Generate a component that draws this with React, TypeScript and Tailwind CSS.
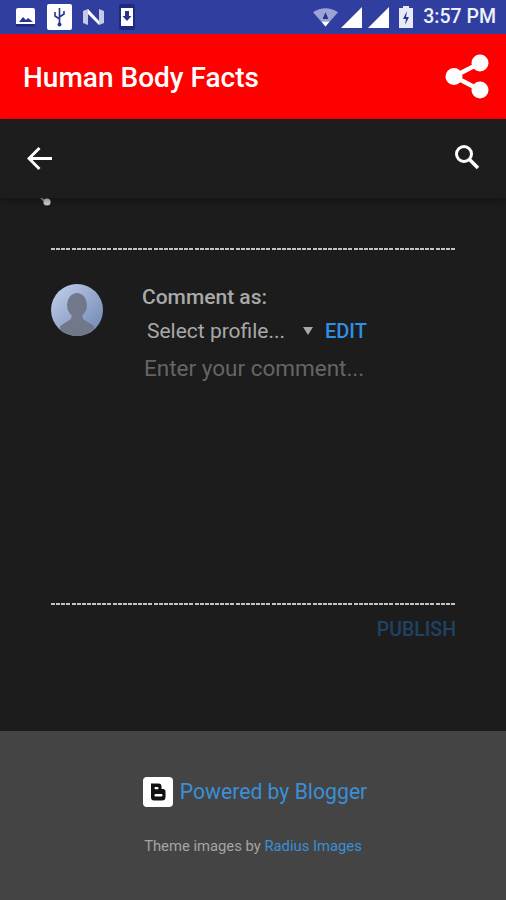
const DASHES =
  "h-[2px] w-full bg-[repeating-linear-gradient(90deg,#c4c4c4_0,#c4c4c4_4px,transparent_4px,transparent_5.128px)]";

function StatusBar() {
  return (
    <div className="flex h-[34px] items-center justify-between bg-[#303f9f] pl-[16px] pr-[10px]">
      <div className="flex items-center">
        <svg width="20" height="20" viewBox="0 0 20 20">
          <rect x="0" y="1" width="19" height="18" rx="2" fill="#fff" />
          <path d="M3 15l4-5 3 3 2-2 5 4z" fill="#27348b" />
          <rect x="0" y="17" width="19" height="2.500" fill="#1c2a80" />
        </svg>
        <svg className="ml-[11px]" width="25" height="26" viewBox="0 0 25 26">
          <rect x="0" y="0" width="25" height="26" rx="2" fill="#fff" />
          <path d="M12.500 4v16M8 8v4l4.500 3M17 7v3l-4.500 3" stroke="#27348b" strokeWidth="1.600" fill="none" />
          <circle cx="12.500" cy="20.500" r="2" fill="#27348b" />
        </svg>
        <svg className="ml-[11px]" width="21" height="20" viewBox="0 0 21 20">
          <path d="M0 4l5-2v16l-5-2zM16 2l5 2v12l-5 2z" fill="#c3cbe6" />
          <path d="M5 2l11 12v4L5 7z" fill="#fff" />
        </svg>
        <svg className="ml-[15px]" width="16" height="26" viewBox="0 0 16 26">
          <rect x="0" y="0" width="16" height="26" rx="2.500" fill="#1c2a80" />
          <rect x="2" y="4" width="12" height="18" fill="#fff" />
          <path d="M6 7h4v5h2.500L8 17 3.500 12H6z" fill="#27348b" />
        </svg>
      </div>
      <div className="flex items-center">
        <svg width="25" height="20" viewBox="0 0 26 20">
          <path d="M0 5Q13-3 26 5L13 20z" fill="#9aa5d6" />
          <path d="M9 15h8l-4 5z" fill="#fff" />
          <path d="M13 5l3 7h-6z" fill="#27348b" />
        </svg>
        <svg className="ml-[3px]" width="21" height="21" viewBox="0 0 21 21">
          <path d="M0 21L21 0v21z" fill="#fff" />
        </svg>
        <svg className="ml-[6px]" width="21" height="21" viewBox="0 0 21 21">
          <path d="M0 21L21 0v21z" fill="#fff" />
        </svg>
        <svg className="ml-[9px]" width="16" height="22" viewBox="0 0 16 22">
          <path d="M5 0h6v2h4v20H1V2h4z" fill="#e8ebf6" />
          <path d="M9 5l-4 8h3l-1 6 4-8H8z" fill="#27348b" />
        </svg>
        <span className="ml-[9px] font-['Roboto',sans-serif] text-[19.500px] font-medium leading-none text-[#eef0fa]">
          3:57 PM
        </span>
      </div>
    </div>
  );
}

function AppBar() {
  return (
    <div className="flex h-[85px] items-center justify-between bg-[#ff0000] pl-[23px] pr-[15px]">
      <h1 className="mt-[2px] font-['Roboto',sans-serif] text-[28px] font-medium leading-none text-white">
        Human Body Facts
      </h1>
      <svg width="47" height="47" viewBox="0 0 47 47">
        <path d="M36 10L10 23.500 36 37" stroke="#fff" strokeWidth="4.500" fill="none" />
        <circle cx="36" cy="10" r="8.500" fill="#fff" />
        <circle cx="10" cy="23.500" r="8.500" fill="#fff" />
        <circle cx="36" cy="37" r="8.500" fill="#fff" />
      </svg>
    </div>
  );
}

function TopNav() {
  return (
    <div className="z-10 flex h-[79px] items-center justify-between bg-[#1d1d1d] pl-[27px] pr-[26px] shadow-[0_2px_6px_rgba(0,0,0,0.35)]">
      <svg width="25" height="25" viewBox="0 0 25 25">
        <path d="M25 12.500H3M12.500 2L2 12.500 12.500 23" stroke="#fff" strokeWidth="3" fill="none" />
      </svg>
      <svg className="mb-[4px]" width="26" height="26" viewBox="0 0 26 26">
        <circle cx="10" cy="10" r="7.500" stroke="#fff" strokeWidth="3" fill="none" />
        <path d="M15.500 15.500L24 24" stroke="#fff" strokeWidth="3.600" fill="none" />
      </svg>
    </div>
  );
}

function CommentForm() {
  return (
    <div className="flex-1 bg-[#1c1c1c] pl-[51px] pr-[50px]">
      <div className="relative h-[50px]">
        <svg className="absolute left-[-13px] top-[-3px]" width="16" height="14" viewBox="0 0 16 14">
          <path d="M1 2l5 2 1 1-2 1z" fill="#8a8a8a" />
          <circle cx="9" cy="7" r="3.600" fill="#c8c8c8" />
        </svg>
      </div>
      <div className={DASHES} />
      <div className="mt-[34px] flex">
        <div className="flex h-[52px] w-[52px] items-end justify-center overflow-hidden rounded-full bg-gradient-to-br from-[#c3d2ee] to-[#6f83ae]">
          <svg width="52" height="52" viewBox="0 0 52 52">
            <ellipse cx="26" cy="21" rx="10" ry="12" fill="#71788a" />
            <path d="M21 30h10l1 5 11 7v10H9V42l11-7z" fill="#71788a" />
          </svg>
        </div>
        <div className="ml-[39px] font-['Roboto',sans-serif]">
          <div className="mt-[2px] text-[21px] font-medium leading-[22px] text-[#a9a9a9]">Comment as:</div>
          <div className="mt-[11px] flex items-center pl-[5px] leading-[24px]">
            <span className="w-[156px] text-[21px] text-[#a8a8a8]">Select profile...</span>
            <span className="h-0 w-0 border-x-[5px] border-t-[8px] border-x-transparent border-t-[#a8a8a8]" />
            <span className="ml-[12px] text-[20px] font-medium text-[#2f8fe6]">EDIT</span>
          </div>
          <div className="mt-[12px] pl-[2px] text-[22.500px] leading-[26px] text-[#656565]">Enter your comment...</div>
        </div>
      </div>
      <div className={`mt-[222px] ${DASHES}`} />
      <div className="mt-[14px] text-right font-['Roboto',sans-serif] text-[19.500px] font-medium leading-[22px] text-[#1f4363]">
        PUBLISH
      </div>
    </div>
  );
}

function Footer() {
  return (
    <footer className="flex h-[169px] flex-col items-center bg-[#444444] pt-[46px] font-['Roboto',sans-serif]">
      <div className="ml-[4px] flex items-center">
        <div className="flex h-[30px] w-[30px] items-center justify-center rounded-[4px] bg-white">
          <svg width="20" height="20" viewBox="0 0 20 20">
            <path
              d="M3 1.500h7.500a3 3 0 0 1 3 3V7h1.500a2.500 2.500 0 0 1 2.500 2.500V15a3.500 3.500 0 0 1-3.500 3.500H6A3 3 0 0 1 3 15.500z"
              fill="#111"
            />
            <rect x="6.500" y="5" width="4" height="2.200" rx="1" fill="#fff" />
            <rect x="6.500" y="12" width="8" height="2.500" rx="1" fill="#fff" />
          </svg>
        </div>
        <span className="ml-[7px] text-[21.200px] leading-none text-[#3b8fd6]">Powered by Blogger</span>
      </div>
      <div className="mt-[29px] text-[14.800px] leading-[20px] text-[#a5a5a5]">
        Theme images by <span className="text-[#3b8fd6]">Radius Images</span>
      </div>
    </footer>
  );
}

export default function App() {
  return (
    <div className="flex h-[900px] w-[506px] flex-col overflow-hidden bg-[#1c1c1c]">
      <StatusBar />
      <AppBar />
      <TopNav />
      <CommentForm />
      <Footer />
    </div>
  );
}
